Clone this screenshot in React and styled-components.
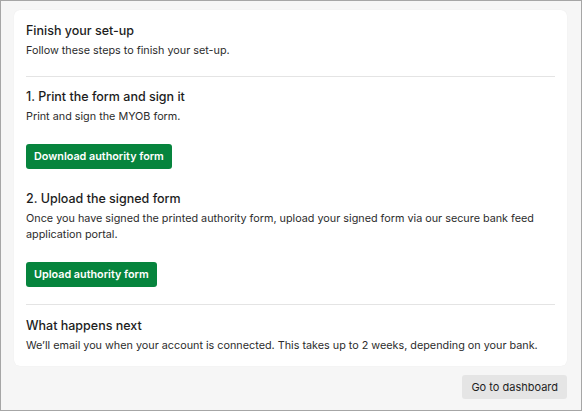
import React from 'react';
import styled, { createGlobalStyle } from 'styled-components';

const GlobalStyle = createGlobalStyle`
  html, body {
    margin: 0;
    padding: 0;
  }
  body {
    font-family: Inter, "Noto Sans", sans-serif;
    -webkit-font-smoothing: antialiased;
  }
`;

const Frame = styled.div`
  box-sizing: border-box;
  width: 582px;
  height: 411px;
  border: 1px solid #a6a6a6;
  background: #f6f6f6;
  padding: 9px 14px 0 13px;
  display: flex;
  flex-direction: column;
`;

const Card = styled.div`
  background: #fff;
  border-radius: 6px;
  box-shadow: 0 0 1px rgba(0, 0, 0, 0.08);
  padding: 13px 12px 12px;
`;

const Section = styled.div`
  margin-top: ${(props) => props.gap || 0}px;
`;

const Title = styled.div`
  font-size: 12.5px;
  font-weight: 500;
  line-height: 16px;
  color: #1d1d1d;
  margin-bottom: 4px;
`;

const Text = styled.p`
  margin: 0;
  font-size: 10.8px;
  line-height: 16px;
  color: #2c2c2c;
  max-width: 528px;
`;

const Divider = styled.hr`
  border: none;
  border-top: 1px solid #e4e4e4;
  margin: 17px 0 ${(props) => props.after || 12}px;
`;

const PrimaryButton = styled.button`
  display: block;
  margin-top: 19px;
  height: 25px;
  padding: 0 8px;
  border: none;
  border-radius: 3px;
  background: #06843d;
  color: #fff;
  font-family: inherit;
  font-size: 10.8px;
  font-weight: 600;
  cursor: pointer;
`;

const Footer = styled.div`
  display: flex;
  justify-content: flex-end;
  margin-top: 9px;
`;

const SecondaryButton = styled.button`
  height: 24px;
  padding: 0 9px;
  border: none;
  border-radius: 3px;
  background: #e5e5e5;
  color: #1f1f1f;
  font-family: inherit;
  font-size: 11px;
  font-weight: 400;
  cursor: pointer;
`;

const App = () => {
  return (
    <>
      <GlobalStyle />
      <Frame>
        <Card>
          <Section>
            <Title>Finish your set-up</Title>
            <Text>Follow these steps to finish your set-up.</Text>
          </Section>
          <Divider />
          <Section>
            <Title>1. Print the form and sign it</Title>
            <Text>Print and sign the MYOB form.</Text>
            <PrimaryButton>Download authority form</PrimaryButton>
          </Section>
          <Section gap={22}>
            <Title>2. Upload the signed form</Title>
            <Text>
              Once you have signed the printed authority form, upload your signed form via our secure bank feed
              application portal.
            </Text>
            <PrimaryButton>Upload authority form</PrimaryButton>
          </Section>
          <Divider after={13} />
          <Section>
            <Title>What happens next</Title>
            <Text>We’ll email you when your account is connected. This takes up to 2 weeks, depending on your bank.</Text>
          </Section>
        </Card>
        <Footer>
          <SecondaryButton>Go to dashboard</SecondaryButton>
        </Footer>
      </Frame>
    </>
  );
};

export default App;
